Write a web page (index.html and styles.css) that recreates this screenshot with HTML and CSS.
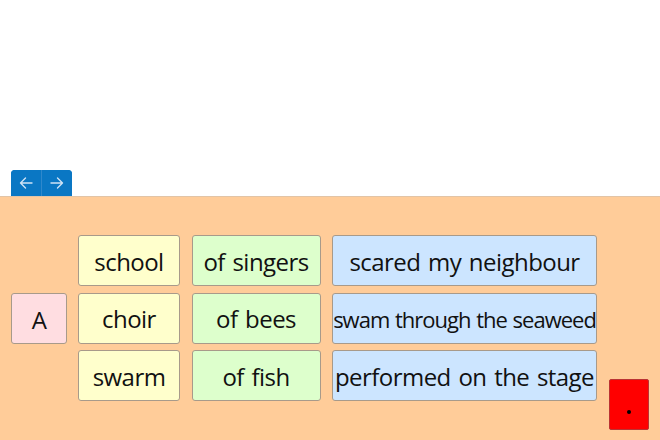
FILE: index.html
```html
<!DOCTYPE html>
<html>
<head>
<meta charset="utf-8">
<link rel="stylesheet" href="styles.css">
</head>
<body>
<div class="top">
  <div class="nav">
    <button class="nav-btn" aria-label="back">
      <svg width="14" height="12" viewBox="0 0 14 12"><path d="M13 6H1.5M6.5 1L1.5 6l5 5" fill="none" stroke="#cfe3f5" stroke-width="1.4" stroke-linecap="round" stroke-linejoin="round"/></svg>
    </button>
    <button class="nav-btn" aria-label="forward">
      <svg width="14" height="12" viewBox="0 0 14 12"><path d="M1 6h11.5M7.5 1l5 5-5 5" fill="none" stroke="#cfe3f5" stroke-width="1.4" stroke-linecap="round" stroke-linejoin="round"/></svg>
    </button>
  </div>
</div>
<div class="panel">
  <div class="card pink label">A</div>
  <div class="grid">
    <div class="card yellow">school</div>
    <div class="card green">of singers</div>
    <div class="card blue">scared my neighbour</div>
    <div class="card yellow">choir</div>
    <div class="card green">of bees</div>
    <div class="card blue tight">swam through the seaweed</div>
    <div class="card yellow">swarm</div>
    <div class="card green">of fish</div>
    <div class="card blue">performed on the stage</div>
  </div>
  <div class="stop"><span class="dot"></span></div>
</div>
</body>
</html>
```
FILE: styles.css
```css
html, body {
  margin: 0;
  padding: 0;
  height: 100%;
  overflow: hidden;
  font-family: "Open Sans", "DejaVu Sans", sans-serif;
}
.top {
  height: 196px;
  display: flex;
  align-items: flex-end;
  padding-left: 11px;
  box-sizing: border-box;
  background: #fff;
}
.nav {
  display: flex;
  height: 26px;
  background: #0a77c4;
  border-radius: 4px 4px 0 0;
  overflow: hidden;
}
.nav-btn {
  width: 30px;
  height: 26px;
  border: 0;
  margin: 0;
  padding: 0;
  background: #0a77c4;
  display: flex;
  align-items: center;
  justify-content: center;
}
.nav-btn + .nav-btn {
  width: 31px;
  border-left: 1px solid #2f88cc;
}
.panel {
  height: 244px;
  box-sizing: border-box;
  background: #ffcc99;
  border-top: 1px solid #e2c4a6;
  display: flex;
  align-items: flex-start;
  padding: 38px 0 0 11px;
}
.card {
  box-sizing: border-box;
  height: 51px;
  border: 1px solid #a89a8a;
  border-radius: 3px;
  display: flex;
  align-items: center;
  justify-content: center;
  font-size: 24px;
  letter-spacing: -0.55px;
  word-spacing: 2px;
  color: #111;
  white-space: nowrap;
  padding-top: 1px;
}
.label {
  width: 56px;
  margin-top: 58px;
  margin-right: 11px;
}
.grid {
  display: grid;
  grid-template-columns: 102px 129px 265px;
  grid-auto-rows: 51px;
  column-gap: 11.5px;
  row-gap: 6.5px;
}
.yellow { background: #ffffcc; }
.green { background: #ddffcc; }
.blue { background: #cce5ff; }
.pink { background: #ffdde1; }
.tight { font-size: 22px; letter-spacing: -1px; word-spacing: 1px; }
.stop {
  width: 40px;
  height: 51px;
  margin-top: 144px;
  margin-left: 12px;
  box-sizing: border-box;
  background: #ff0000;
  border: 1px solid #b33;
  border-radius: 2px;
  display: flex;
  align-items: flex-end;
  justify-content: center;
  padding-bottom: 15px;
}
.dot {
  width: 4px;
  height: 4px;
  border-radius: 50%;
  background: #000;
}
```
